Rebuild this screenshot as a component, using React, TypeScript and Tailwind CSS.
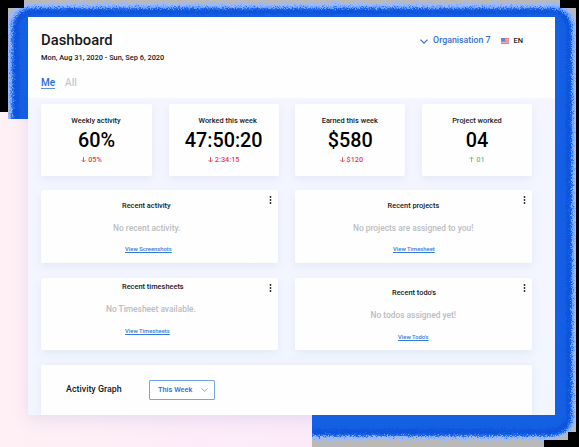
import React from "react";

const stats = [
  { title: "Weekly activity", value: "60%", change: "05%", up: false, titleShift: "pr-[1px]", changeShift: "pr-[10px]", width: "w-[111px]" },
  { title: "Worked this week", value: "47:50:20", change: "2:34:15", up: false, titleShift: "pl-[8px]", changeShift: "", width: "w-[110px]" },
  { title: "Earned this week", value: "$580", change: "$120", up: false, titleShift: "pr-[1px]", changeShift: "pl-[2px]", width: "w-[110px]" },
  { title: "Project worked", value: "04", change: "01", up: true, titleShift: "", changeShift: "", width: "w-[110px]" },
];

const panels = [
  { title: "Recent activity", text: "No recent activity.", link: "View Screenshots", pad: "pt-[9px]", dots: "-mt-[3px]", titlePad: "pl-[81px]", textPad: "pl-[72px]", linkPad: "pl-[84px] mt-[10px]" },
  { title: "Recent projects", text: "No projects are assigned to you!", link: "View Timesheet", pad: "pt-[9px]", dots: "-mt-[3px]", titlePad: "pl-[92.6px]", textPad: "pl-[58px]", linkPad: "pl-[98px] mt-[10px]" },
  { title: "Recent timesheets", text: "No Timesheet available.", link: "View Timesheets", pad: "pt-[2px]", dots: "mt-[4px]", titlePad: "pl-[81px]", textPad: "pl-[65px]", linkPad: "pl-[84px] mt-[11px]" },
  { title: "Recent todo's", text: "No todos assigned yet!", link: "View Todo's", pad: "pt-[8px]", dots: "-mt-[2px]", titlePad: "pl-[97px]", textPad: "pl-[75.5px]", linkPad: "pl-[103px] mt-[11px]" },
];

function Backdrop() {
  return (
    <svg className="absolute inset-0 -z-10" width="579" height="447" viewBox="0 0 579 447" aria-hidden="true">
      <defs>
        <filter id="grain" x="0" y="0" width="579" height="447" filterUnits="userSpaceOnUse" colorInterpolationFilters="sRGB">
          <feTurbulence type="fractalNoise" baseFrequency="1.37" numOctaves="3" seed="4" />
          <feDisplacementMap in="SourceGraphic" scale="8" xChannelSelector="R" yChannelSelector="G" />
        </filter>
        <linearGradient id="pink" x1="0" x2="1" y1="0" y2="0">
          <stop offset="0" stopColor="#fff0f5" />
          <stop offset="1" stopColor="#fceafa" />
        </linearGradient>
      </defs>
      <rect width="579" height="447" fill="#000" />
      <path d="M24 0H560V8H576V432H568V440H544V447H8V8H24Z" fill="#b9b9b7" />
      <g filter="url(#grain)">
        <rect x="7" y="3" width="569" height="437" rx="23" fill="#9ab7ff" />
        <rect x="10" y="6" width="564" height="431" rx="21" fill="#6ea2fc" />
        <rect x="12" y="8" width="560" height="428" rx="20" fill="#2875f2" />
        <rect x="14" y="9.5" width="556.5" height="425" rx="19" fill="#1054dc" />
        <rect x="19" y="14" width="547" height="415" rx="14" fill="#1260e5" />
      </g>
      <path d="M576 8H579V447H576ZM560 0H579V8H560ZM544 440H579V447H544ZM568 432H579V440H568ZM0 0H24V8H8V112H0Z" fill="#000" />
      <path d="M0 112H8V119H28V415H312V447H0Z" fill="url(#pink)" />
    </svg>
  );
}

function Arrow({ up }: { up: boolean }) {
  return (
    <svg width="5" height="7" viewBox="0 0 5 7" fill="none" stroke="currentColor" strokeWidth=".85" className={up ? "rotate-180" : ""}>
      <path d="M2.5 1v5M.5 4l2 2 2-2" />
    </svg>
  );
}

function Flag() {
  return (
    <svg width="8" height="6" viewBox="0 0 8 6">
      <path fill="#f1c4ce" d="M0 0h8v6H0z" />
      <path stroke="#e75d70" strokeWidth=".8" d="M0 .4h8M0 2.1h8M0 3.8h8M0 5.6h8" />
      <path fill="#6f83c4" d="M0 0h4.2v3.5H0z" />
    </svg>
  );
}

export default function App() {
  return (
    <div className="relative isolate h-[447px] w-[579px] overflow-hidden pt-[17px] pl-7 font-['Roboto',sans-serif] font-medium text-[#17181b]">
      <Backdrop />
      <main className="h-[398px] w-[527px] overflow-hidden bg-[#f4f5fe] bg-linear-to-b from-[#f5f5ff] to-[#f1f6fe] shadow-[0_4px_16px_#5363b322]">
        <header className="h-[81px] bg-[#fefeff] px-[13px]">
          <div className="flex h-[58px] justify-between">
            <div className="pt-[13px]">
              <h1 className="h-[21px] text-[14.8px] leading-[21px]">Dashboard</h1>
              <p className="mt-px text-[7.4px] leading-[12px] whitespace-nowrap">Mon, Aug 31, 2020 - Sun, Sep 6, 2020</p>
            </div>
            <div className="mt-[18px] flex h-3 items-center pr-[19px]">
              <svg width="8" height="5" viewBox="0 0 8 5" fill="none" stroke="#376fd4" strokeWidth="1.2"><path d="m.5.7 3.5 3.5L7.5.7" /></svg>
              <span className="ml-[5px] text-[8.8px] text-[#376ed1]">Organisation 7</span>
              <span className="ml-[10px]"><Flag /></span>
              <span className="ml-[5px] text-[7.4px]">EN</span>
            </div>
          </div>
          <nav className="flex gap-[10px] text-[10px] leading-[15px]">
            <span className="h-[14px] border-b border-[#6292df] text-[#286dd9]">Me</span>
            <span className="text-[#c8c9cd]">All</span>
          </nav>
        </header>

        <section className="flex justify-between pt-[6px] pr-[23px] pl-[13px]">
          {stats.map((s) => (
            <article key={s.title} className={`${s.width} flex h-[72px] flex-col items-center rounded-[2px] bg-[#fefeff] pt-[11px] shadow-[0_3px_8px_#727bb01c]`}>
              <h2 className={`${s.titleShift} text-[7.4px] leading-[11px]`}>{s.title}</h2>
              <strong className="mt-[3px] text-[19.8px] leading-[24px] font-medium text-black">{s.value}</strong>
              <div className={`${s.changeShift} ${s.up ? "text-[#55c99a]" : "text-[#e13e4b]"} mt-px flex items-center gap-[2px] text-[7.3px] leading-[11px]`}>
                <Arrow up={s.up} />{s.change}
              </div>
            </article>
          ))}
        </section>

        <section className="grid grid-cols-2 gap-x-[17px] gap-y-[15px] pt-[14px] pr-[23px] pl-[13px]">
          {panels.map((p) => (
            <article key={p.title} className={`${p.pad} flex h-[73px] justify-between rounded-[2px] bg-[#fefeff] pr-[6px] shadow-[0_3px_8px_#727bb01c] nth-[n+3]:h-[72px]`}>
              <div className="whitespace-nowrap">
                <h2 className={`${p.titlePad} text-[7.4px] leading-[13px]`}>{p.title}</h2>
                <p className={`${p.textPad} mt-[10px] text-[8.4px] leading-[13px] text-[#bbbcc0]`}>{p.text}</p>
                <div className={`${p.linkPad} text-[5.85px] leading-[9px] text-[#357bd9] underline`}>{p.link}</div>
              </div>
              <svg width="3" height="8" viewBox="0 0 3 8" className={p.dots} fill="#202124">
                <circle cx="1.5" cy="1" r=".9" /><circle cx="1.5" cy="4" r=".9" /><circle cx="1.5" cy="7" r=".9" />
              </svg>
            </article>
          ))}
        </section>

        <section className="mt-[15px] mr-[23px] ml-[13px] flex h-[50px] items-center rounded-t-[2px] bg-[#fefeff] pl-[25px] shadow-[0_0_8px_#727bb01c]">
          <h2 className="w-[83px] text-[8.9px]">Activity Graph</h2>
          <button className="flex h-5 w-[66px] items-center justify-between rounded-[1px] border border-[#76a4e8] pr-[6px] pl-[8px] text-[7.4px] text-[#286fd5]">
            This Week
            <svg width="7" height="4" viewBox="0 0 7 4" fill="none" stroke="#4c84d8" strokeWidth=".7"><path d="m.5.5 3 2.8L6.5.5" /></svg>
          </button>
        </section>
      </main>
    </div>
  );
}
